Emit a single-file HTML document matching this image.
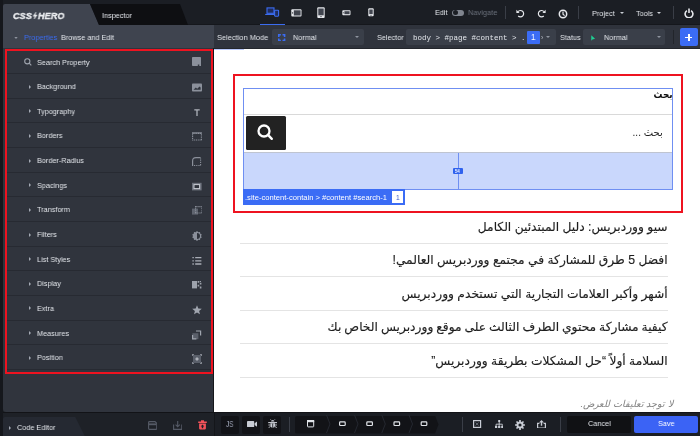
<!DOCTYPE html>
<html><head><meta charset="utf-8">
<style>
*{box-sizing:border-box;margin:0;padding:0}
html,body{width:700px;height:436px;overflow:hidden;background:#1b1e24;font-family:"Liberation Sans",sans-serif;font-size:8px;color:#dfe2e8}
.abs,.t,.row,.ic{position:absolute}
.t{white-space:nowrap;line-height:10px;font-size:8px;color:#e3e6eb;transform:scaleX(.91);transform-origin:0 0;will-change:transform}
#top{left:0;top:0;width:700px;height:25px;background:#1b1e24}
#lstrip{left:0;top:0;width:3px;height:436px;background:#15171c}
#tab1{left:3px;top:4px;width:96px;height:21px;background:#3f444f;clip-path:polygon(0 0,87px 0,96px 21px,0 21px);border-top-left-radius:2px}
#tab2{left:90px;top:4px;width:98px;height:21px;background:#0e0f12;clip-path:polygon(0 0,90px 0,98px 21px,9px 21px)}
#bar2l{left:3px;top:25px;width:211px;height:24px;background:#3f444f}
#bar2r{left:213.8px;top:25px;width:487px;height:23.7px;background:#2f333c;border-bottom:1.2px solid #23262c}
#panel{left:3px;top:48px;width:210px;height:363.5px;background:#30343d;border-bottom-left-radius:3px}
#red1{left:5px;top:49.1px;width:208px;height:324.9px;border:2.2px solid #ee1320}
.row{left:7px;width:204px;height:24.65px;border-bottom:1px solid #272a32}
#page{left:217px;top:48.5px;width:483px;height:363px;background:#fff;box-shadow:-3px 0 0 #fff}
#gap{left:213.2px;top:48px;width:1px;height:388px;background:#15171b}
.dd{background:#3a3f49;border-radius:2px;height:16px;top:29px}
.sep{width:1px;background:#3a3e47}
.car{width:0;height:0;border-left:2.2px solid transparent;border-right:2.2px solid transparent;border-top:2.6px solid #8f95a0}
.tri{width:0;height:0;border-top:2px solid transparent;border-bottom:2px solid transparent;border-left:2.6px solid #a4a9b4}
.ar{font-family:"Liberation Sans","DejaVu Sans",sans-serif;direction:rtl;color:#222}
.li{position:absolute;right:32.4px;white-space:nowrap;font-size:12.25px;line-height:16px;color:#1e1e1e;-webkit-text-stroke:0.15px #1e1e1e}
.hl{position:absolute;left:23px;width:428px;height:1px;background:#e4e4e4}
.bb{top:415.5px;height:18px;background:#121317;border-radius:2px}
</style></head><body>
<div class="abs" id="top"></div>
<div class="abs" style="left:186px;top:23.6px;width:514px;height:1.4px;background:#15171c"></div>
<div class="abs" id="tab1"></div>
<div class="abs" id="tab2"></div>
<div class="t" id="logo" style="left:13px;top:10.5px;font-size:9.6px;font-weight:bold;font-style:italic;letter-spacing:0.15px;color:#e9ebee;transform:scaleX(.935);will-change:transform;-webkit-text-stroke:0.4px #e9ebee">CSS<svg width="5.2" height="7.6" viewBox="0 0 6 9" style="vertical-align:-0.3px;margin:0 0.6px 0 0.8px"><path d="M4.2 0 L0.3 5 H2.6 L1.6 9 L5.7 3.6 H3.3 Z" fill="#e9ebee" stroke="#e9ebee" stroke-width="0.5"/></svg>HERO</div>
<div class="t" id="insp" style="left:102px;top:10.5px">Inspector</div>
<div class="abs" id="bar2l"></div>
<div class="abs" id="bar2r"></div>
<div class="abs" id="panel"></div>
<div class="abs" id="gap"></div>

<!-- top bar items -->
<div class="abs" style="left:260px;top:23.8px;width:24.5px;height:1.3px;background:#3b6cf0"></div>
<svg class="ic" style="left:265px;top:7px" width="15" height="10" viewBox="0 0 15 10"><rect x="2" y="0.9" width="7" height="5.4" fill="#1f2c5c" stroke="#3b6cf0" stroke-width="1.1"/><rect x="0.2" y="6.9" width="9" height="1.1" fill="#3b6cf0"/><rect x="9.6" y="3.2" width="4" height="6" rx="0.6" fill="#1f2c5c" stroke="#3b6cf0" stroke-width="1.1"/></svg>
<svg class="ic" style="left:291.3px;top:8.5px" width="11" height="8" viewBox="0 0 11 8"><rect x="0.3" y="0.3" width="10.2" height="7.2" rx="0.9" fill="#e6e8ec"/><rect x="2.8" y="1.3" width="6.8" height="5.2" fill="#41454f"/><circle cx="1.6" cy="3.9" r="0.6" fill="#1b1e24"/></svg>
<svg class="ic" style="left:317.4px;top:6.9px" width="8.2" height="11.4" viewBox="0 0 8.2 11.4"><rect x="0.3" y="0.3" width="7.4" height="10.6" rx="0.9" fill="#e6e8ec"/><rect x="1.3" y="1.5" width="5.4" height="6.8" fill="#41454f"/><circle cx="4" cy="9.6" r="0.6" fill="#1b1e24"/></svg>
<svg class="ic" style="left:341.5px;top:10px" width="9" height="5.6" viewBox="0 0 9 5.6"><rect x="0.3" y="0.2" width="8.2" height="5" rx="0.9" fill="#e6e8ec"/><rect x="2.4" y="1.2" width="5.2" height="3" fill="#41454f"/><circle cx="1.4" cy="2.7" r="0.5" fill="#1b1e24"/></svg>
<svg class="ic" style="left:367.5px;top:8.3px" width="6.2" height="8.6" viewBox="0 0 6.2 8.6"><rect x="0.3" y="0.3" width="5.4" height="7.9" rx="0.9" fill="#e6e8ec"/><rect x="1.3" y="1.5" width="3.4" height="4.6" fill="#41454f"/><circle cx="3" cy="7.2" r="0.5" fill="#1b1e24"/></svg>

<div class="t" style="left:434.8px;top:8.3px">Edit</div>
<div class="abs" style="left:452px;top:9.6px;width:11.6px;height:6.4px;border-radius:3.2px;background:#80858f"></div>
<div class="abs" style="left:452.8px;top:10.3px;width:5px;height:5px;border-radius:2.5px;background:#1b1e24"></div>
<div class="t" style="left:467.8px;top:8.3px;color:#6b717c;transform:scaleX(.93)">Navigate</div>
<div class="abs sep" style="left:504.6px;top:6px;height:13px"></div>
<svg class="ic" style="left:515.5px;top:8.5px" width="9" height="9" viewBox="0 0 9 9"><path d="M2 2.6 A3.2 3.2 0 1 1 2.2 7" fill="none" stroke="#e6e8ec" stroke-width="1.2"/><path d="M0.4 0.8 V4 H3.6 Z" fill="#e6e8ec"/></svg>
<svg class="ic" style="left:536.5px;top:8.5px" width="9" height="9" viewBox="0 0 9 9"><path d="M7 2.6 A3.2 3.2 0 1 0 6.8 7" fill="none" stroke="#e6e8ec" stroke-width="1.2"/><path d="M8.6 0.8 V4 H5.4 Z" fill="#e6e8ec"/></svg>
<svg class="ic" style="left:557.5px;top:8.5px" width="10" height="10" viewBox="0 0 10 10"><circle cx="5" cy="5" r="3.7" fill="none" stroke="#e6e8ec" stroke-width="1.5"/><path d="M5 2.6 V5.2 L6.6 6.6" fill="none" stroke="#e6e8ec" stroke-width="1.2"/></svg>
<div class="abs sep" style="left:578px;top:6px;height:13px"></div>
<div class="t" style="left:592px;top:8.6px">Project</div>
<div class="abs car" style="left:619.5px;top:12px;border-top-color:#c9cdd4"></div>
<div class="t" style="left:635.5px;top:8.6px">Tools</div>
<div class="abs car" style="left:656.8px;top:12px;border-top-color:#c9cdd4"></div>
<div class="abs sep" style="left:673px;top:6px;height:13px"></div>
<svg class="ic" style="left:683.5px;top:7.5px" width="10" height="10.5" viewBox="0 0 10 10.5"><path d="M2.9 2.6 A3.9 3.9 0 1 0 7.1 2.6" fill="none" stroke="#e6e8ec" stroke-width="1.6"/><path d="M5 0.4 V5" stroke="#e6e8ec" stroke-width="1.6"/></svg>

<!-- second bar -->
<div class="abs tri" style="left:15px;top:35.5px;transform:rotate(90deg) scale(.85);border-left-color:#a9aeb8"></div>
<div class="t" style="left:23.5px;top:32.5px;color:#3b6cf0">Properties</div>
<div class="t" style="left:60.5px;top:32.5px">Browse and Edit</div>
<div class="t" style="left:217.4px;top:32.5px;transform:scaleX(.93)">Selection Mode</div>
<div class="abs dd" style="left:272px;width:92px"></div>
<svg class="ic" style="left:278.3px;top:33.5px" width="7.4" height="7.4" viewBox="0 0 7.4 7.4"><path d="M0.8 2.9 V0.8 H2.9 M4.5 0.8 H6.6 V2.9 M6.6 4.5 V6.6 H4.5 M2.9 6.6 H0.8 V4.5" fill="none" stroke="#3b6cf0" stroke-width="1.6"/></svg>
<div class="t" style="left:293px;top:32.5px">Normal</div>
<div class="abs car" style="left:354.8px;top:36px"></div>
<div class="t" style="left:376.8px;top:32.5px">Selector</div>
<div class="abs dd" style="left:406px;width:149.5px"></div>
<div class="t" style="left:413px;top:32.5px;font-family:'Liberation Mono',monospace;font-size:7.5px;transform:none">body &gt; #page #content &gt; .</div>
<div class="abs" style="left:526.5px;top:30.5px;width:13.3px;height:13px;background:#3b6cf5;border-radius:1px"></div>
<div class="t" style="left:530.8px;top:32.2px;color:#fff;font-size:8.5px">1</div>
<div class="t" style="left:540.5px;top:32.5px;color:#c5c9d0;font-size:7px">›</div>
<div class="abs car" style="left:546px;top:36px"></div>
<div class="t" style="left:560px;top:32.5px">Status</div>
<div class="abs dd" style="left:583px;width:82px"></div>
<svg class="ic" style="left:591.2px;top:34.6px" width="4.4" height="6.2" viewBox="0 0 5 7"><path d="M0.3 0.3 L4.6 4.2 L1.6 5 L0.3 6.6 Z" fill="#1fcf93"/></svg>
<div class="t" style="left:603.5px;top:32.5px">Normal</div>
<div class="abs car" style="left:656.8px;top:36px"></div>
<div class="abs sep" style="left:673.2px;top:30px;height:14px;background:#22252b"></div>
<div class="abs" style="left:680px;top:28.2px;width:18px;height:17.4px;background:#3b6cf5;border-radius:2px"></div>
<div class="abs" style="left:685.4px;top:36.7px;width:7px;height:1.6px;background:#fff"></div>
<div class="abs" style="left:688.1px;top:34px;width:1.6px;height:7px;background:#fff"></div>

<!-- left panel rows -->
<div id="rows">
<div class="row" style="top:49.40px"><svg class="ic" style="left:17.3px;top:8.9px" width="8" height="8" viewBox="0 0 8 8"><circle cx="3.3" cy="3.3" r="2.6" fill="none" stroke="#9ea3ad" stroke-width="1.1"/><path d="M5.2 5.2 L7.3 7.3" stroke="#9ea3ad" stroke-width="1.2"/></svg><div class="t" style="left:30.2px;top:8.5px">Search Property</div><svg class="ic" style="left:185px;top:8.0px" width="10" height="10" viewBox="0 0 10 10"><path d="M0.8 0 H8.2 Q9 0 9 0.8 V9 H7.3 V7.6 H5.8 V9 H0.8 Q0 9 0 8.2 V0.8 Q0 0 0.8 0 Z" fill="#8b909b"/></svg></div>
<div class="row" style="top:74.05px"><div class="abs tri" style="left:22px;top:10.6px"></div><div class="t" style="left:30.2px;top:8px">Background</div><svg class="ic" style="left:185px;top:9.0px" width="10" height="10" viewBox="0 0 10 10"><rect x="0" y="0.5" width="10" height="8" rx="0.8" fill="#8b909b"/><path d="M1.5 6.8 L3.8 4.6 L5.2 5.8 L7.6 3.4 L8.6 4.4 V6.8 Z" fill="#2f333c"/></svg></div>
<div class="row" style="top:98.70px"><div class="abs tri" style="left:22px;top:10.6px"></div><div class="t" style="left:30.2px;top:8px">Typography</div><svg class="ic" style="left:185px;top:9.0px" width="10" height="10" viewBox="0 0 10 10"><path d="M2.3 1.3 H7.7 V2.6 H5.65 V8 H4.35 V2.6 H2.3 Z" fill="#aeb2bb"/></svg></div>
<div class="row" style="top:123.35px"><div class="abs tri" style="left:22px;top:10.6px"></div><div class="t" style="left:30.2px;top:8px">Borders</div><svg class="ic" style="left:185px;top:9.0px" width="10" height="10" viewBox="0 0 10 10"><rect x="0.6" y="1.4" width="8.8" height="6.6" fill="none" stroke="#8b909b" stroke-width="1.1" stroke-dasharray="1.1 0.7"/><path d="M0 0.9 H10" stroke="#8b909b" stroke-width="1.1"/></svg></div>
<div class="row" style="top:148.00px"><div class="abs tri" style="left:22px;top:10.6px"></div><div class="t" style="left:30.2px;top:8px">Border-Radius</div><svg class="ic" style="left:185px;top:9.0px" width="10" height="10" viewBox="0 0 10 10"><path d="M0.6 9 V4 Q0.6 0.6 4 0.6 H8.6" fill="none" stroke="#8b909b" stroke-width="1.2"/><path d="M8.6 1.5 V9 M2 8.5 H8.6" fill="none" stroke="#8b909b" stroke-width="1.1" stroke-dasharray="1 0.8"/></svg></div>
<div class="row" style="top:172.65px"><div class="abs tri" style="left:22px;top:10.6px"></div><div class="t" style="left:30.2px;top:8px">Spacings</div><svg class="ic" style="left:185px;top:9.0px" width="10" height="10" viewBox="0 0 10 10"><rect x="0" y="0.8" width="9.6" height="7.6" fill="#6e737e"/><rect x="2" y="2.6" width="5.6" height="4" fill="#2f333c" stroke="#c8ccd3" stroke-width="1"/></svg></div>
<div class="row" style="top:197.30px"><div class="abs tri" style="left:22px;top:10.6px"></div><div class="t" style="left:30.2px;top:8px">Transform</div><svg class="ic" style="left:185px;top:9.0px" width="10" height="10" viewBox="0 0 10 10"><rect x="0" y="2.6" width="6" height="6" fill="#5f646f"/><rect x="3.6" y="0.6" width="6.4" height="6.4" fill="none" stroke="#8b909b" stroke-width="1.1" stroke-dasharray="1.1 0.8"/></svg></div>
<div class="row" style="top:221.95px"><div class="abs tri" style="left:22px;top:10.6px"></div><div class="t" style="left:30.2px;top:8px">Filters</div><svg class="ic" style="left:185px;top:9.0px" width="10" height="10" viewBox="0 0 10 10"><path d="M5 0 L6.3 1.2 L8 1 L8.3 2.7 L9.8 3.6 L9 5 L9.8 6.4 L8.3 7.3 L8 9 L6.3 8.8 L5 10 L3.7 8.8 L2 9 L1.7 7.3 L0.2 6.4 L1 5 L0.2 3.6 L1.7 2.7 L2 1 L3.7 1.2 Z" fill="#8b909b"/><path d="M5 2 A3 3 0 0 1 5 8 Z" fill="#2f333c"/></svg></div>
<div class="row" style="top:246.60px"><div class="abs tri" style="left:22px;top:10.6px"></div><div class="t" style="left:30.2px;top:8px">List Styles</div><svg class="ic" style="left:185px;top:9.0px" width="10" height="10" viewBox="0 0 10 10"><path d="M0.4 1.6 H1.8 M0.4 4.8 H1.8 M0.4 8 H1.8 M3.2 1.6 H9.4 M3.2 4.8 H9.4 M3.2 8 H9.4" stroke="#a9adb7" stroke-width="1.3"/></svg></div>
<div class="row" style="top:271.25px"><div class="abs tri" style="left:22px;top:10.6px"></div><div class="t" style="left:30.2px;top:8px">Display</div><svg class="ic" style="left:185px;top:9.0px" width="10" height="10" viewBox="0 0 10 10"><rect x="0" y="1" width="5" height="7.4" fill="#9da2ac"/><path d="M5.6 1 h1.6 v1.8 h-1.6z M7.8 2.8 h1.6 v1.8 h-1.6z M5.6 4.7 h1.6 v1.8 h-1.6z M7.8 6.6 h1.6 v1.8 h-1.6z M7.8 1 h1.2 v0.9 h-1.2z" fill="#9da2ac"/></svg></div>
<div class="row" style="top:295.90px"><div class="abs tri" style="left:22px;top:10.6px"></div><div class="t" style="left:30.2px;top:8px">Extra</div><svg class="ic" style="left:185px;top:9.0px" width="10" height="10" viewBox="0 0 10 10"><path d="M5 0.2 L6.3 3.5 L9.8 3.7 L7.1 5.9 L8 9.3 L5 7.4 L2 9.3 L2.9 5.9 L0.2 3.7 L3.7 3.5 Z" fill="#a0a5af"/></svg></div>
<div class="row" style="top:320.55px"><div class="abs tri" style="left:22px;top:10.6px"></div><div class="t" style="left:30.2px;top:8px">Measures</div><svg class="ic" style="left:185px;top:9.0px" width="10" height="10" viewBox="0 0 10 10"><rect x="0.4" y="3.2" width="6" height="6" fill="#5a5f6a"/><path d="M4 1 H8.6 V5.6 M0.6 5 V8.8 H4.4" fill="none" stroke="#a0a5af" stroke-width="1.2"/></svg></div>
<div class="row" style="top:345.20px"><div class="abs tri" style="left:22px;top:10.6px"></div><div class="t" style="left:30.2px;top:8px">Position</div><svg class="ic" style="left:185px;top:9.0px" width="10" height="10" viewBox="0 0 10 10"><rect x="1" y="1" width="8" height="8" fill="#5a5f6a"/><path d="M0.3 2 V0.3 H2 M8 0.3 H9.7 V2 M9.7 8 V9.7 H8 M2 9.7 H0.3 V8" fill="none" stroke="#a0a5af" stroke-width="0.9"/><path d="M5 3.3 V6.7 M3.3 5 H6.7" stroke="#c8ccd3" stroke-width="1"/></svg></div>
</div><!--endrows-->
<div class="abs" id="red1"></div>

<!-- page -->
<div class="abs" id="page">
  <div class="abs" style="left:-3px;top:0;width:30px;height:1.3px;background:#b9c9fa"></div>
  <div class="abs" style="left:16px;top:25.5px;width:450px;height:139px;border:2px solid #ee1320"></div>
  <!-- search widget -->
  <div class="abs" style="left:26px;top:39.5px;width:430px;height:101.8px;border:1px solid #6f8ff2"></div>
  <div class="abs ar" style="right:27.7px;top:39.3px;font-size:10.5px;font-weight:bold;line-height:13px;color:#111;transform:scaleX(.84);transform-origin:100% 0">بحث</div>
  <div class="abs" style="left:27px;top:65px;width:428px;height:1px;background:#d9d9d9"></div>
  <div class="abs" style="left:28.7px;top:67.5px;width:40.5px;height:34.4px;background:#222;border-radius:1.5px"></div>
  <svg class="ic" style="left:39.4px;top:74.9px" width="18" height="18" viewBox="0 0 18 18"><circle cx="8" cy="8" r="5.5" fill="none" stroke="#fff" stroke-width="2.3"/><path d="M12.2 12.2 L15.8 15.8" stroke="#fff" stroke-width="2.4" stroke-linecap="round"/></svg>
  <div class="abs ar" style="right:37px;top:77px;font-size:10.5px;line-height:13px;color:#1c1c1c;transform:scaleX(.95);transform-origin:100% 0">بحث ...</div>
  <div class="abs" style="left:27px;top:103px;width:428px;height:37.3px;background:#c9d7fc;border-top:1px solid #bfc4d0"></div>
  <div class="abs" style="left:241.3px;top:104px;width:1px;height:36.3px;background:#6f8ff2"></div>
  <div class="abs" style="left:235.5px;top:119.5px;width:10.4px;height:6.4px;background:#2f62ee;border-radius:1px"></div>
  <div class="t" style="left:237.6px;top:119.1px;font-size:4.6px;line-height:7px;color:#fff;font-weight:bold;left:237.9px">54</div>
  <div class="abs" style="left:26px;top:140.6px;width:161.5px;height:15.9px;background:#3b6cf5"></div>
  <div class="t" style="left:27.8px;top:144.6px;font-size:7.6px;color:#fff;transform:none">.site-content-contain &gt; #content #search-1</div>
  <div class="abs" style="left:174.5px;top:142.5px;width:11px;height:12px;background:#fff"></div>
  <div class="t" style="left:178.6px;top:144.6px;font-size:6.8px;color:#2d50c8">1</div>
  <!-- list -->
  <div class="li ar" style="top:170.5px">سيو ووردبريس: دليل المبتدئين الكامل</div>
  <div class="hl" style="top:194.5px"></div>
  <div class="li ar" style="top:203.9px">افضل 5 طرق للمشاركة في مجتمع ووردبريس العالمي!</div>
  <div class="hl" style="top:227.9px"></div>
  <div class="li ar" style="top:237.3px">أشهر وأكبر العلامات التجارية التي تستخدم ووردبريس</div>
  <div class="hl" style="top:261.3px"></div>
  <div class="li ar" style="top:270.7px;word-spacing:-0.42px">كيفية مشاركة محتوي الطرف الثالث على موقع ووردبريس الخاص بك</div>
  <div class="hl" style="top:294.7px"></div>
  <div class="li ar" style="top:304.1px">السلامة أولاً “حل المشكلات بطريقة ووردبريس”</div>
  <div class="hl" style="top:328.1px"></div>
  <div class="abs ar" style="right:27px;top:349.5px;font-size:9.5px;font-style:italic;color:#828282;white-space:nowrap;line-height:12px">لا توجد تعليقات للعرض.</div>
</div>

<!-- bottom bar -->
<div class="abs" style="left:3px;top:411.5px;width:211px;height:24.5px;background:#1e2127"></div>
<div class="abs" style="left:0;top:411.5px;width:700px;height:1px;background:#121317"></div>
<div class="abs" style="left:214px;top:411.5px;width:1px;height:24.5px;background:#14161a"></div>
<div class="abs" style="left:3px;top:416.5px;width:82px;height:20px;background:#252932;clip-path:polygon(0 0,72px 0,82px 20px,0 20px);border-top-left-radius:2px"></div>
<div class="abs tri" style="left:9.3px;top:425.5px"></div>
<div class="t" style="left:17px;top:422.7px">Code Editor</div>
<div class="abs bb" style="left:221px;width:17.6px"></div>
<div class="t" style="left:226px;top:419.2px;color:#9aa0b2;font-size:9px;transform:scaleX(.72)">JS</div>
<div class="abs bb" style="left:242px;width:17.8px"></div>
<div class="abs bb" style="left:263.3px;width:17.8px"></div>

<svg class="ic" style="left:148px;top:420.8px" width="9.4" height="9" viewBox="0 0 9.4 9"><path d="M0.6 1.4 Q0.6 0.6 1.4 0.6 H7 L8.8 2.4 V7.6 Q8.8 8.4 8 8.4 H1.4 Q0.6 8.4 0.6 7.6 Z" fill="none" stroke="#555a66" stroke-width="1.1"/><rect x="1" y="2.4" width="7.4" height="1.8" fill="#555a66"/></svg>
<svg class="ic" style="left:172.5px;top:420.8px" width="9.4" height="9" viewBox="0 0 9.4 9"><path d="M0.6 3.4 V8.4 H8.8 V3.4" fill="none" stroke="#555a66" stroke-width="1.1"/><path d="M4.7 0 V5.4 M2.6 3.6 L4.7 5.8 L6.8 3.6" fill="none" stroke="#555a66" stroke-width="1.1"/></svg>
<svg class="ic" style="left:197.8px;top:420.4px" width="9" height="9.6" viewBox="0 0 9 9.6"><path d="M0.2 1.6 H8.8 V3 H0.2 Z M3 0.2 H6 V1.6 H3 Z" fill="#f4525a"/><path d="M1.1 3.6 H7.9 V8.6 Q7.9 9.4 7.1 9.4 H1.9 Q1.1 9.4 1.1 8.6 Z" fill="#f4525a"/><path d="M4.5 4.6 L6.3 6.6 H5.2 V8.2 H3.8 V6.6 H2.7 Z" fill="#1e2127"/></svg>
<svg class="ic" style="left:246.6px;top:421px" width="10.4" height="6.2" viewBox="0 0 10.4 6.2"><rect x="0" y="0" width="7.2" height="6.2" rx="0.8" fill="#c8ccd4"/><path d="M7.6 2.2 L10.2 0.4 V5.8 L7.6 4 Z" fill="#c8ccd4"/></svg>
<svg class="ic" style="left:267.6px;top:419.3px" width="9.4" height="9" viewBox="0 0 9.4 9"><path d="M3 2.6 A1.7 1.7 0 0 1 6.4 2.6 Z" fill="#c8ccd4"/><path d="M2.4 0.3 L3.4 1.3 M7 0.3 L6 1.3" stroke="#c8ccd4" stroke-width="0.7"/><path d="M0.2 3.6 H9.2" stroke="#c8ccd4" stroke-width="1.1"/><path d="M2.4 4.2 H7 V7 Q7 8.8 4.7 8.8 Q2.4 8.8 2.4 7 Z" fill="#c8ccd4"/><path d="M0.4 6 H2.4 M7 6 H9 M0.6 8.6 L2.4 7.6 M8.8 8.6 L7 7.6" stroke="#c8ccd4" stroke-width="0.9"/><path d="M4.7 4.6 V8.8" stroke="#121317" stroke-width="0.8"/></svg>
<div class="abs sep" style="left:288.5px;top:416.5px;height:15px"></div>
<div class="abs bb" style="left:295px;width:140px;clip-path:polygon(0 0,140px 0,143.5px 9px,140px 18px,0 18px);width:143.5px"></div>

<svg class="ic" style="left:295px;top:415.2px" width="145" height="18" viewBox="0 0 145 18">
<g fill="none" stroke="#252830" stroke-width="1"><path d="M31.5 0 L35 9 L31.5 18"/><path d="M59.5 0 L63 9 L59.5 18"/><path d="M86.8 0 L90.3 9 L86.8 18"/><path d="M114 0 L117.5 9 L114 18"/></g>
<rect x="12.5" y="5.5" width="6.2" height="6.4" rx="0.6" fill="none" stroke="#e0e3e8" stroke-width="1"/><rect x="12" y="5" width="7.2" height="2.2" fill="#e0e3e8"/>
<g fill="none" stroke="#e0e3e8" stroke-width="1.2"><rect x="44.6" y="6.9" width="5.6" height="3.6" rx="0.8"/><rect x="71.8" y="6.9" width="5.6" height="3.6" rx="0.8"/><rect x="99" y="6.9" width="5.6" height="3.6" rx="0.8"/><rect x="126.2" y="6.9" width="5.6" height="3.6" rx="0.8"/></g>
</svg>
<div class="abs sep" style="left:462.3px;top:416.5px;height:15px"></div>

<svg class="ic" style="left:473.4px;top:420.4px" width="8.2" height="8" viewBox="0 0 8.2 8"><rect x="0.6" y="0.6" width="7" height="6.8" fill="none" stroke="#c8ccd4" stroke-width="1.2"/><path d="M2.6 2.6 L5.6 5.4 M5.6 2.6 L2.6 5.4" stroke="#6b707a" stroke-width="0.9"/></svg>
<svg class="ic" style="left:494.6px;top:420.2px" width="8.4" height="8" viewBox="0 0 8.4 8"><rect x="3.2" y="0" width="2" height="2" fill="#c8ccd4"/><path d="M4.2 2 V4.2 M1.1 5.8 V4.2 H7.3 V5.8 M4.2 4.2 V5.8" fill="none" stroke="#c8ccd4" stroke-width="0.9"/><rect x="0" y="5.8" width="2.2" height="2.2" fill="#c8ccd4"/><rect x="3.1" y="5.8" width="2.2" height="2.2" fill="#c8ccd4"/><rect x="6.2" y="5.8" width="2.2" height="2.2" fill="#c8ccd4"/></svg>
<svg class="ic" style="left:515px;top:419.7px" width="10" height="10" viewBox="0 0 10 10"><path d="M9.93 4.14 L9.93 5.86 L8.50 5.84 L8.07 6.88 L9.09 7.88 L7.88 9.09 L6.88 8.07 L5.84 8.50 L5.86 9.93 L4.14 9.93 L4.16 8.50 L3.12 8.07 L2.12 9.09 L0.91 7.88 L1.93 6.88 L1.50 5.84 L0.07 5.86 L0.07 4.14 L1.50 4.16 L1.93 3.12 L0.91 2.12 L2.12 0.91 L3.12 1.93 L4.16 1.50 L4.14 0.07 L5.86 0.07 L5.84 1.50 L6.88 1.93 L7.88 0.91 L9.09 2.12 L8.07 3.12 L8.50 4.16 Z" fill="#c8ccd4"/><circle cx="5" cy="5" r="1.6" fill="#1b1e24"/></svg>
<svg class="ic" style="left:536.8px;top:419.6px" width="9" height="8.6" viewBox="0 0 9 8.6"><path d="M2.4 3.4 H0.6 V8 H8.4 V3.4 H6.6" fill="none" stroke="#c8ccd4" stroke-width="1.2"/><path d="M4.5 0 L7 2.6 H5.2 V5.8 H3.8 V2.6 H2 Z" fill="#c8ccd4"/></svg>
<div class="abs sep" style="left:560px;top:416.5px;height:15px"></div>
<div class="abs bb" style="left:567px;width:64px;height:17.2px;background:#101114"></div>
<div class="t" style="left:588px;top:419.3px">Cancel</div>
<div class="abs bb" style="left:634px;width:64px;height:17.2px;background:#3b63f5"></div>
<div class="t" style="left:658.3px;top:419.3px;color:#fff">Save</div>

<div class="abs" id="lstrip"></div>
</body></html>
